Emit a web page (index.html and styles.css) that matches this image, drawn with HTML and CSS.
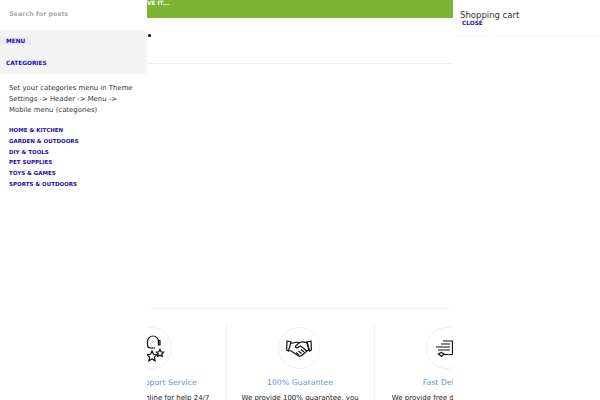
FILE: index.html
```html
<html>
    <head>
        <link rel="stylesheet" href="styles.css">
        <title>Shop</title>
    </head>
    <body>

<div class="page">
    <div class="topbar"><span class="topbar-text">GIVE IT...</span></div>
    <div class="header">
        <ul class="dots"><li></li></ul>
    </div>
    <div class="spacer"></div>
    <div class="features">
        <div class="feature">
            <div class="circle">
                <svg class="icon" width="30" height="30" viewBox="0 0 30 30" fill="none" stroke="#111" stroke-width="1.2">
                    <path d="M11.500 12V8.500a5.500 5.500 0 0 1 11 0V11"/>
                    <path d="M22.500 7.500h1.500v4.500h-1.500z"/>
                    <path d="M11.500 12c0 2 1.500 3 3 3h4.500"/>
                    <path d="M16 18l1.500 3.300 3.500.4-2.600 2.400.7 3.600-3.100-1.800-3.100 1.800.7-3.600-2.600-2.400 3.500-.4z"/>
                    <path d="M24 16.500l1.100 2.300 2.500.3-1.800 1.700.5 2.500-2.300-1.200-2.300 1.200.5-2.500-1.800-1.700 2.500-.3z"/>
                </svg>
            </div>
            <div class="feature-title">Online Support Service</div>
            <p>Our staff are online for help 24/7</p>
        </div>
        <div class="feature">
            <div class="circle">
                <svg class="icon" width="26" height="18" viewBox="0 0 26 18" fill="none" stroke="#111" stroke-width="1.2">
                    <path d="M1 2l4 1-2.500 9L.6 11zM25 2l-4 1 2.500 9 1.900-1z"/>
                    <path d="M5 4c2 .5 4-.8 6-1l2 1 3-1.200c1.500 0 3 .8 4.800.5L23 11l-1.500.5-6 5c-1 .8-2 .8-3 .2L5 12l-1.500-.500"/>
                    <path d="M13 4l-3.500 3c-.6 1.500 1.500 2.300 2.600 1.500L14.500 7l6.500 5"/>
                    <path d="M10 13.500l3 2.500M12.500 12l3 2.500M15 10.500l3 2.500"/>
                </svg>
            </div>
            <div class="feature-title">100% Guarantee</div>
            <p>We provide 100% guarantee, you</p>
        </div>
        <div class="feature">
            <div class="circle">
                <svg class="icon" width="24" height="24" viewBox="0 0 24 24" fill="none" stroke="#111" stroke-width="1.2">
                    <path d="M8 5h9.500v13.500h-4"/>
                    <path d="M6 8h9M1 11h14M3 14h12"/>
                    <path d="M3.500 18l3 2.500L9 18l-2.500-1.500z"/>
                    <path d="M9 18.500h4.500"/>
                </svg>
            </div>
            <div class="feature-title">Fast Delivery</div>
            <p>We provide free delivery for you</p>
        </div>
    </div>
</div>

<div class="drawer-left">
    <div class="search">Search for posts</div>
    <div class="tabs">
        <div class="tab-row"><a class="tab tab-active" href="#">MENU</a></div>
        <div class="tab-row"><a class="tab" href="#">CATEGORIES</a></div>
    </div>
    <p class="note">Set your categories menu in Theme Settings -&gt; Header -&gt; Menu -&gt; Mobile menu (categories)</p>
    <ul class="cats">
        <li><a href="#">HOME &amp; KITCHEN</a></li>
        <li><a href="#">GARDEN &amp; OUTDOORS</a></li>
        <li><a href="#">DIY &amp; TOOLS</a></li>
        <li><a href="#">PET SUPPLIES</a></li>
        <li><a href="#">TOYS &amp; GAMES</a></li>
        <li><a href="#">SPORTS &amp; OUTDOORS</a></li>
    </ul>
</div>

<div class="drawer-right">
    <div class="cart-head">
        <div class="cart-title">Shopping cart</div>
        <a class="cart-close" href="#">CLOSE</a>
    </div>
</div>

    </body>
</html>
```

FILE: styles.css
```css
* {
    box-sizing: border-box;
}

html, body {
    margin: 0;
    height: 400px;
    overflow: hidden;
}

body {
    font-family: "DejaVu Sans", sans-serif;
    background: #fff;
    color: #333;
}

a {
    color: #1a0dab;
    text-decoration: none;
}

/* Page under the drawers */
.page {
    width: 600px;
}

.topbar {
    height: 18px;
    padding-left: 140px;
    background: #7cb534;
}

.topbar-text {
    display: block;
    font-size: 5.800px;
    line-height: 6px;
    font-weight: 700;
    color: #fff;
}

.header {
    height: 46px;
    border-bottom: 1px solid #eee;
}

.dots {
    margin: 0;
    padding: 16px 0 0 148px;
    list-style: none;
}

.dots li {
    width: 3px;
    height: 3px;
    border-radius: 50%;
    background: #000;
}

.spacer {
    height: 245px;
    border-bottom: 1px solid #f6f6f6;
}

.features {
    display: flex;
    padding: 16px 0 0 79px;
}

.feature {
    width: 148px;
    height: 84px;
    padding-right: 1px;
    border-right: 1px solid #f2f2f2;
    text-align: center;
    overflow: hidden;
}

.circle {
    display: flex;
    align-items: center;
    justify-content: center;
    width: 42px;
    height: 42px;
    margin: 2px 0 0 51px;
    border: 1px solid #f0f0f0;
    border-radius: 50%;
}

.feature-title {
    margin-top: 8px;
    font-size: 7.800px;
    line-height: 12px;
    color: #5b9bd5;
}

.feature p {
    margin: 2px 0 0;
    font-size: 7px;
    line-height: 14px;
    color: #222;
    white-space: nowrap;
}

/* Drawers */
.drawer-left {
    position: absolute;
    left: 0;
    top: 0;
    width: 147px;
    height: 400px;
    background: #fff;
}

.search {
    height: 30px;
    padding: 9px 0 0 9px;
    font-size: 6.400px;
    line-height: 11px;
    font-weight: 700;
    color: #aaa;
}

.tabs {
    height: 44px;
    padding-top: 7px;
    background: #f4f4f4;
}

.tab-row {
    height: 22px;
}

.tab {
    display: inline-block;
    padding: 0 7px 0 6px;
    font-size: 5.800px;
    line-height: 8px;
    font-weight: 700;
}

.tab-active {
    width: 31px;
    background: #ececec;
}

.note {
    margin: 9px 0 0;
    padding: 0 9px;
    font-size: 6.900px;
    line-height: 11px;
    color: #333;
}

.cats {
    margin: 9px 0 0;
    padding: 0 0 0 9px;
    list-style: none;
}

.cats li {
    font-size: 5.500px;
    line-height: 10.800px;
    font-weight: 700;
}

.drawer-right {
    position: absolute;
    right: 0;
    top: 0;
    width: 147px;
    height: 400px;
    background: #fff;
}

.cart-head {
    height: 36px;
    padding: 10px 0 0 7px;
    border-bottom: 1px solid #f7f7f7;
}

.cart-title {
    font-size: 8.500px;
    line-height: 10px;
    color: #333;
}

.cart-close {
    display: block;
    margin-left: 2px;
    font-size: 5.800px;
    line-height: 6px;
    font-weight: 700;
}
```
